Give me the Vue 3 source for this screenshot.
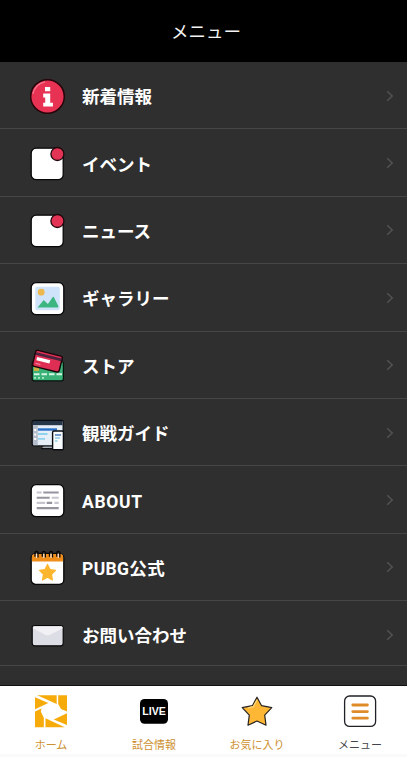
<script setup>
const items = [
  { id: 'info', label: '新着情報' },
  { id: 'badge', label: 'イベント' },
  { id: 'badge', label: 'ニュース' },
  { id: 'gallery', label: 'ギャラリー' },
  { id: 'store', label: 'ストア' },
  { id: 'guide', label: '観戦ガイド' },
  { id: 'about', label: 'ABOUT' },
  { id: 'calendar', label: 'PUBG公式' },
  { id: 'mail', label: 'お問い合わせ' },
]
const tabs = [
  { id: 'home', label: 'ホーム' },
  { id: 'live', label: '試合情報' },
  { id: 'favorite', label: 'お気に入り' },
  { id: 'menu', label: 'メニュー' },
]
const rings = [8.5, 15.8, 23, 30.3]
</script>

<template>
  <div class="screen">
    <header class="header">メニュー</header>
    <main class="list">
      <div v-for="item in items" :key="item.label" class="row">
        <svg class="icon" viewBox="0 0 40 40">
          <g v-if="item.id === 'info'">
            <circle cx="19.5" cy="20.5" r="16.8" fill="#e83254" stroke="#260409" stroke-width="1.5" />
            <path d="M4.8 18A15 15 0 0 1 17 5.8" fill="none" stroke="#f2768c" stroke-width="1.3" />
            <path d="M17 11h5.2v4.2H17zM15.2 17.5h7v9.2h2.7v3.8H15.2v-3.8h2v-5.3h-2z" fill="#fff" />
          </g>
          <g v-else-if="item.id === 'badge'">
            <rect x="3.2" y="5.2" width="32" height="31.5" rx="5" fill="#fff" stroke="#080808" stroke-width="1.3" />
            <circle cx="29.4" cy="11" r="6.5" fill="#e33455" stroke="#21080d" stroke-width="1.3" />
          </g>
          <g v-else-if="item.id === 'gallery'">
            <rect x="3.2" y="4.7" width="32.6" height="32" rx="5" fill="#fff" stroke="#080808" stroke-width="1.3" />
            <rect x="7.3" y="8.7" width="24.5" height="23.5" rx="1.8" fill="#cfe4fb" />
            <circle cx="13.2" cy="14.2" r="3.4" fill="#edb84d" />
            <path d="M9.6 29.5l6.1-7.6 4.2 4.2 4.9-7q.5-.6 1 0l4.5 9q.5 1.4-.8 1.4z" fill="#3cb681" />
          </g>
          <g v-else-if="item.id === 'store'">
            <rect x="4.2" y="16.5" width="31.2" height="19.3" rx="2" fill="#39b177" stroke="#07130d" stroke-width="1.2" />
            <path d="M6 22h5v4H6z" fill="#c8ae3f" />
            <path d="M6 29.2h5.5m2 0h5.5m2 0h5.5m2 0h5.5" stroke="#d4f7e4" stroke-width="2" />
            <path d="M6 32.8h2m2 0h2m2 0h2" stroke="#a9e9c8" stroke-width="1.8" />
            <g transform="rotate(14 19.5 16)">
              <rect x="5.8" y="8" width="27.4" height="16.4" rx="2" fill="#df2e54" stroke="#19050a" stroke-width="1.4" />
              <path d="M6.6 11.5h26" stroke="#49243c" stroke-width="2.8" />
              <path d="M8.5 16.3h13.5" stroke="#fff" stroke-width="3.2" />
              <path d="M8.5 21.2h5" stroke="#f37b95" stroke-width="1.3" />
            </g>
          </g>
          <g v-else-if="item.id === 'guide'">
            <path d="M16 33h9v2H14z" fill="#a2a9b1" />
            <path d="M13 35.7h14" stroke="#0b0e12" stroke-width="1.2" />
            <rect x="4.2" y="7.3" width="31" height="25.6" rx="1.8" fill="#e6eef8" stroke="#090c11" stroke-width="1.3" />
            <path d="M5 8h29.5v4.2H5z" fill="#263548" />
            <path d="M5 12.2h4.8v20H5z" fill="#b5bdca" />
            <path d="M6.2 17h2m-2 4.5h2m-2 4.5h2" stroke="#fff" stroke-width="2.2" />
            <path d="M10 16.5h19" stroke="#2870c9" stroke-width="2.4" />
            <path d="M10 21h9.5m-9.5 4.8h7" stroke="#90d3ef" stroke-width="1.8" />
            <rect x="24.6" y="18" width="10.8" height="18.7" rx="1.3" fill="#f9fcff" stroke="#090c11" stroke-width="1.4" />
            <path d="M27 22h6" stroke="#3975b9" stroke-width="1.4" />
            <path d="M27 25h5m-5 3h2.5" stroke="#8ccce6" stroke-width="1.3" />
          </g>
          <g v-else-if="item.id === 'about'">
            <rect x="3.2" y="4.7" width="32.6" height="32" rx="5" fill="#fff" stroke="#080808" stroke-width="1.3" />
            <g fill="none" stroke-width="2.1">
              <path d="M8.7 12.5h5m10 5.2h7M8.7 22.9h8.5m9.2 0h4.3" stroke="#c6c5cd" />
              <path d="M15.3 12.5h15.4M8.7 17.7h13m-3 5.2h5.5M8.7 28.1h22" stroke="#95949f" />
            </g>
          </g>
          <g v-else-if="item.id === 'calendar'">
            <rect x="3.2" y="6.3" width="32.6" height="31" rx="4.5" fill="#fff" stroke="#080808" stroke-width="1.3" />
            <path d="M3.9 14.4V10q0-3 3-3h25.2q3 0 3 3v4.4z" fill="#ef8d1b" />
            <g v-for="x in rings" :key="x">
              <path :d="`M${x - 1.5} 9.8V5.8a1.5 1.5 0 0 1 3 0v4.6`" fill="none" stroke="#080808" stroke-width="1.3" />
              <path :d="`M${x} 6.4v4.6`" stroke="#f3e2d6" stroke-width="1.2" />
            </g>
            <path d="M19.5 17.5l2.5 5 5.5.8-4 4 .9 5.6-4.9-2.6-5 2.6 1-5.6-4-4 5.5-.8z" fill="#fcb62e" stroke="#fcb62e" stroke-width="1.2" stroke-linejoin="round" />
          </g>
          <g v-else>
            <rect x="4.2" y="10.6" width="31" height="20.2" rx="2.5" fill="#dddde5" stroke="#080808" stroke-width="1.2" />
            <path d="M4.8 12.5q0-1.3 1.5-1.3h26.8q1.5 0 1.5 1.3v.8l-12.4 6.4q-2.5 1.2-5 0L4.8 13.3z" fill="#f1f1f5" />
          </g>
        </svg>
        <span class="label" :class="item.id">{{ item.label }}</span>
        <svg class="chevron" viewBox="0 0 8 12">
          <path d="M1.2 1.2l5 4.8-5 4.8" fill="none" stroke="#525252" stroke-width="1.5" />
        </svg>
      </div>
    </main>
    <nav class="tabs">
      <div v-for="tab in tabs" :key="tab.id" class="tab" :class="tab.id">
        <svg v-if="tab.id === 'home'" class="tab-icon" viewBox="0 0 36 36">
          <g fill="#f6ab0b">
            <path d="M2 4.3L15.3 10 2 16.2z" />
            <path d="M4.2 2.2h19.5v8.7z" />
            <path d="M25.2 2.2H34v16.4l-6-2.7-2.8-4.8z" />
            <path d="M34 32.1l-13.3-5.7L34 20.2z" />
            <path d="M31.8 34.2H12.5v-8.9z" />
            <path d="M10.8 34.2H2V18.6l6.6-3.2-.8 3.2 3 6.2z" />
          </g>
        </svg>
        <svg v-else-if="tab.id === 'live'" class="tab-icon" viewBox="0 0 36 36">
          <rect x="4" y="6" width="28" height="24.8" rx="4.5" fill="#000" />
          <text class="live-text" x="18" y="22.4" text-anchor="middle" textLength="23.5" lengthAdjust="spacingAndGlyphs">LIVE</text>
        </svg>
        <svg v-else-if="tab.id === 'favorite'" class="tab-icon" viewBox="0 0 36 36">
          <path d="M18 4.2l4.6 8.5 10.2 2-7.1 7.4 1.3 10.1L18 28l-9 4.2 1.3-10.1-7.1-7.4 10.2-2z" fill="#fdb734" stroke="#292522" stroke-width="1.2" stroke-linejoin="round" />
          <path d="M18 7l-3.8 6.7-5 1.1" fill="none" stroke="#ffda80" stroke-width="1.2" />
        </svg>
        <svg v-else class="tab-icon" viewBox="0 0 36 36">
          <rect x="2.6" y="3" width="31" height="30.4" rx="5" fill="#fff" stroke="#202127" stroke-width="1.3" />
          <path d="M10.8 12h14.6M10.8 18.6h14.6M10.8 25.2h14.6" stroke="#df8b29" stroke-width="2.8" stroke-linecap="round" />
        </svg>
        <span class="tab-label">{{ tab.label }}</span>
      </div>
    </nav>
  </div>
</template>

<style>
body { margin: 0; background: #f8f8f8; }
</style>

<style scoped>
.screen {
  display: flex;
  flex-direction: column;
  width: 407px;
  height: 757px;
  overflow: hidden;
  background: #fafafa;
  font-family: Roboto, "Noto Sans CJK JP", sans-serif;
}
.header {
  display: flex;
  flex: none;
  align-items: center;
  justify-content: center;
  box-sizing: border-box;
  height: 62px;
  padding: 1px 0 0 5px;
  background: #000;
  color: #f4f4f4;
  font-size: 17.5px;
  line-height: 24px;
}
.list {
  box-sizing: border-box;
  flex: none;
  height: 624px;
  background: #2f2f2f;
  border-bottom: 1px solid #111;
}
.row {
  display: flex;
  align-items: center;
  box-sizing: border-box;
  height: 67.4px;
  padding: 1px 13px 0 28px;
  border-bottom: 1px solid #464646;
}
.row:last-child { height: 65px; padding-top: 3px; }
.icon { flex: none; width: 40px; height: 40px; }
.label {
  flex: 1;
  margin-left: 14px;
  padding-top: 3px;
  color: #fff;
  font-size: 17.5px;
  font-weight: 700;
  line-height: 24px;
  white-space: nowrap;
}
.label.about { letter-spacing: 0.65px; }
.label.calendar { letter-spacing: 0.35px; }
.chevron { width: 8px; height: 12px; }
.tabs {
  display: grid;
  grid-template-columns: repeat(4, 103px);
  flex: none;
  box-sizing: border-box;
  height: 68px;
  margin-left: -0.5px;
  background: #fff;
}
.tab { display: flex; flex-direction: column; align-items: center; padding-top: 7px; }
.tab-icon { width: 36px; height: 36px; }
.tab-label {
  margin-top: 8px;
  color: #cd9030;
  font-size: 11px;
  line-height: 18px;
  white-space: nowrap;
}
.menu .tab-label { color: #45434a; }
.live-text { fill: #fff; font-family: "Liberation Sans", sans-serif; font-size: 10.5px; font-weight: 700; }
</style>
